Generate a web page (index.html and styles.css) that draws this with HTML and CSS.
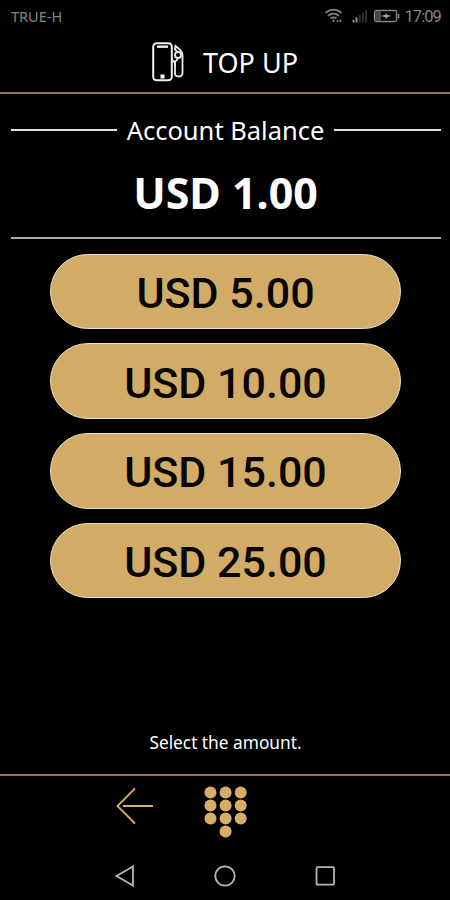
FILE: index.html
```
<!DOCTYPE html>
<html lang="en">
<head>
<meta charset="utf-8">
<title>Top Up</title>
<link rel="stylesheet" href="styles.css">
</head>
<body>
<div class="status">
  <span class="carrier">TRUE-H</span>
  <svg class="status-icons" width="76" height="16" viewBox="0 0 76 16" fill="none" stroke="#858585">
    <path d="M1.500 4.700Q9.500-1.300 17.500 4.700M4 7.700Q9.500 3.500 15 7.700M6.500 10.400Q9.500 8.200 12.500 10.400" stroke-width="1.7"/>
    <path d="M9.500 11.500v2.500M13.500 12v2M16.500 11.500v2.500" stroke-width="1.6"/>
    <path d="M29.500 12v2.500M32.500 9.500v5" stroke-width="1.8" stroke="#999"/>
    <path d="M35.800 7v7.500M39 4.500v10M42 2v12.500" stroke-width="1.8" stroke="#303030"/>
    <rect x="50.500" y="2.500" width="22" height="11" rx="1.500" stroke-width="1.3"/>
    <path d="M51 3h6v10h-6z" fill="#484848" stroke="none"/>
    <path d="M74.500 6v4.500" stroke-width="1.7"/>
    <path d="M56.500 8l5-1.300V5l2 2 4 .9-4.500 1.200v1.800L61 9z" fill="#aaa" stroke="none"/>
  </svg>
  <span class="clock">17:09</span>
</div>
<header class="header">
  <svg width="32" height="40" viewBox="0 0 32 40" fill="none" stroke="#eee" stroke-width="1.8">
    <rect x="1.200" y="1.200" width="18.600" height="37" rx="3.500" stroke-width="2"/>
    <path d="M5 4.700h11" stroke-width="2.400"/>
    <path d="M8.500 32.500h4v4h-4z" fill="#fff" stroke="none"/>
    <path d="M20 19c2.500 0 3 1 3 4v8q0 3.500 3.700 3.500t3.800-3.500V13.500q0-3-1.800-5L23.500 4l-.5 3.500 2 2"/>
    <path d="M25.500 17q-.5 1.500-2.500 2.500v5"/>
    <circle cx="26" cy="13" r="3"/>
  </svg>
  <h1>TOP UP</h1>
</header>
<main class="content">
  <section class="balance">
    <div class="caption"><span>Account Balance</span></div>
    <div class="total">USD 1.00</div>
  </section>
  <div class="amounts">
    <button>USD 5.00</button>
    <button>USD 10.00</button>
    <button>USD 15.00</button>
    <button>USD 25.00</button>
  </div>
  <p class="hint">Select the amount.</p>
</main>
<footer class="toolbar">
  <svg width="38" height="38" viewBox="0 0 38 38" fill="none" stroke="#d4ae67" stroke-width="1.8">
    <path d="M19 1.500L1.500 19 19 36.500M7 19h30"/>
  </svg>
  <svg width="44" height="52" viewBox="0 0 44 52" fill="#d7ae67">
    <circle cx="6.500" cy="6.500" r="6"/><circle cx="21.600" cy="6.500" r="6"/><circle cx="36.700" cy="6.500" r="6"/>
    <circle cx="6.500" cy="19.500" r="6"/><circle cx="21.600" cy="19.500" r="6"/><circle cx="36.700" cy="19.500" r="6"/>
    <circle cx="6.500" cy="32.500" r="6"/><circle cx="21.600" cy="32.500" r="6"/><circle cx="36.700" cy="32.500" r="6"/>
    <circle cx="21.600" cy="45.500" r="6"/>
  </svg>
</footer>
<nav class="system">
  <svg width="22" height="22" viewBox="0 0 22 22"><path d="M19 1.500v19L2.500 11z"/></svg>
  <svg width="22" height="22" viewBox="0 0 22 22"><circle cx="11" cy="11" r="9.700"/></svg>
  <svg width="22" height="22" viewBox="0 0 22 22"><rect x="2.500" y="2.200" width="17.500" height="17.500" rx="1"/></svg>
</nav>
</body>
</html>
```
FILE: styles.css
```
* { box-sizing: border-box; }
body {
  margin: 0;
  height: 900px;
  display: flex;
  flex-direction: column;
  overflow: hidden;
  background: #000;
  color: #fff;
  font-family: "Noto Sans", sans-serif;
}
.status {
  height: 32px;
  padding: 0 9px 0 11px;
  display: flex;
  align-items: center;
  color: #858585;
  font: 14.5px/32px "Noto Sans", sans-serif;
}
.status-icons { margin-left: auto; margin-right: 4px; }
.clock { font: 16.5px/33px Roboto, sans-serif; letter-spacing: -0.9px; }
.header {
  height: 62px;
  padding: 0 0 0 152px;
  display: flex;
  align-items: center;
  gap: 19px;
  border-bottom: 2px solid #8d7748;
}
h1 {
  margin: 1px 0 0;
  font-size: 27px;
  font-weight: 400;
  line-height: 40px;
}
.content {
  flex: 1;
  padding-left: 1px;
  display: flex;
  flex-direction: column;
  align-items: center;
}
.balance {
  width: 430px;
  height: 145px;
  border-bottom: 2px solid #aaa;
}
.caption {
  display: flex;
  align-items: center;
  gap: 10px;
  height: 36px;
  margin-top: 18px;
  font-size: 25.5px;
  line-height: 36px;
  white-space: nowrap;
}
.caption::before, .caption::after {
  content: "";
  flex: 1;
  height: 2px;
  background: #ddd;
}
.total {
  margin-top: 15px;
  text-align: center;
  font-size: 43px;
  font-weight: 700;
  line-height: 60px;
}
.amounts {
  width: 351px;
  margin-top: 14.5px;
  display: grid;
  gap: 14.3px;
}
button {
  height: 75.5px;
  padding: 3px 0 0;
  border: 1.5px solid #eee0c5;
  border-radius: 38px;
  background: #d2ac66;
  color: #080500;
  font: 500 43px/66px Roboto, sans-serif;
}
.hint {
  margin: auto 0 19px;
  font-size: 17.3px;
  line-height: 24px;
}
.toolbar {
  height: 76px;
  padding: 10px 0 0 116px;
  display: flex;
  align-items: flex-start;
  gap: 50px;
  border-top: 2px solid #8d7650;
}
.toolbar svg:first-child { margin-top: 1px; }
.system {
  height: 50px;
  padding: 1px 114px 0;
  display: flex;
  align-items: center;
  justify-content: space-between;
}
.system svg {
  fill: none;
  stroke: #b5b5b5;
  stroke-width: 1.8;
}
```
